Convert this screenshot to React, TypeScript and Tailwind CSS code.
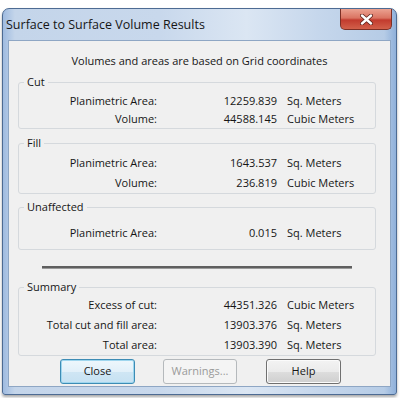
import React from "react";

const FONT = "font-['Open_Sans','Noto_Sans',sans-serif]";

type Row = { label: string; value: string; unit: string };

const cutRows: Row[] = [
  { label: "Planimetric Area:", value: "12259.839", unit: "Sq. Meters" },
  { label: "Volume:", value: "44588.145", unit: "Cubic Meters" },
];
const fillRows: Row[] = [
  { label: "Planimetric Area:", value: "1643.537", unit: "Sq. Meters" },
  { label: "Volume:", value: "236.819", unit: "Cubic Meters" },
];
const unaffectedRows: Row[] = [{ label: "Planimetric Area:", value: "0.015", unit: "Sq. Meters" }];
const summaryRows: Row[] = [
  { label: "Excess of cut:", value: "44351.326", unit: "Cubic Meters" },
  { label: "Total cut and fill area:", value: "13903.376", unit: "Sq. Meters" },
  { label: "Total area:", value: "13903.390", unit: "Sq. Meters" },
];

function ResultRow({ row, h }: { row: Row; h: string }) {
  return (
    <div className={`flex items-center ${h}`}>
      <div className="w-[138px] text-right">{row.label}</div>
      <div className="w-[120px] text-right">{row.value}</div>
      <div className="ml-[10px]">{row.unit}</div>
    </div>
  );
}

function Group({ title, rows, className, rowH, bodyClass }: { title: string; rows: Row[]; className: string; rowH: string; bodyClass: string }) {
  return (
    <fieldset className={`ml-[9px] mr-[14px] rounded-[3px] border border-[#d5d9dd] ${className}`}>
      <legend className="ml-[5px] px-[3px] leading-[16px]">{title}</legend>
      <div className={bodyClass}>
        {rows.map((r) => (
          <ResultRow key={r.label} row={r} h={rowH} />
        ))}
      </div>
    </fieldset>
  );
}

export default function App() {
  return (
    <div className={`w-[400px] h-[398px] bg-white pt-[8px] pl-[2px] overflow-hidden ${FONT}`}>
      <div className="w-[395px] h-[387px] rounded-t-[7px] rounded-b-[3px] border border-[#4d6b93] bg-[linear-gradient(90deg,#9fbbe0_0%,#c4d5ea_3%,#c8d8ec_40%,#dbe6f3_62%,#c6d7ec_80%,#b6cce6_97%,#8fb0da_100%)] shadow-[0_2px_3px_rgba(0,0,0,0.35)] flex flex-col">
        <div className="h-[31px] flex justify-between">
          <div className="pl-[3px] pt-[7px] text-[12.5px] leading-[17px] text-[#161616]">Surface to Surface Volume Results</div>
          <div className="mr-[4px] w-[52px] h-[21px] rounded-b-[5px] border border-t-0 border-[#7d2f25] bg-[linear-gradient(180deg,#eba291_0%,#da7462_45%,#c23b2e_55%,#d2604a_100%)] flex items-center justify-center">
            <svg width="13" height="11" viewBox="0 0 13 11">
              <path d="M2 1.5 L11 9.5 M11 1.5 L2 9.5" stroke="#5a2018" strokeWidth="4" strokeLinecap="round" />
              <path d="M2 1.5 L11 9.5 M11 1.5 L2 9.5" stroke="#ffffff" strokeWidth="2.4" strokeLinecap="round" />
            </svg>
          </div>
        </div>
        <div className="ml-[5px] mr-[5px] mb-[7px] flex-1 border border-[#8ea6c4] bg-[#f0f0f0] text-[11px] text-[#161616] flex flex-col">
          <div className="pt-[12px] h-[28px] leading-[16px] text-center">Volumes and areas are based on Grid coordinates</div>
          <Group title="Cut" rows={cutRows} className="mt-[5px]" rowH="h-[18px]" bodyClass="pt-[2px]" />
          <Group title="Fill" rows={fillRows} className="mt-[6px]" rowH="h-[20px]" bodyClass="pt-[2px] pb-[0px]" />
          <Group title="Unaffected" rows={unaffectedRows} className="mt-[5px]" rowH="h-[20px]" bodyClass="pt-[8px] pb-[6px]" />
          <div className="ml-[33px] mt-[16px] w-[310px] h-[3px] bg-[#5f5f5f] border-b border-[#9a9a9a]" />
          <Group title="Summary" rows={summaryRows} className="mt-[10px]" rowH="h-[20px]" bodyClass="" />
          <div className="mt-[3px] flex ml-[51px]">
            <button className="w-[75px] h-[25px] rounded-[3px] border border-[#3d8cb5] bg-[linear-gradient(180deg,#eef7fc_0%,#e2f0f9_50%,#cfe6f4_52%,#c6e1f2_100%)] shadow-[inset_0_0_0_1px_#9fd6ee] text-[#161616]">
              Close
            </button>
            <button className="ml-[28px] w-[74px] h-[25px] rounded-[3px] border border-[#b5b9bc] bg-[#f4f4f4] text-[#9a9a9a]">
              Warnings...
            </button>
            <button className="ml-[29px] w-[75px] h-[25px] rounded-[3px] border border-[#707070] bg-[linear-gradient(180deg,#f3f3f3_0%,#ebebeb_50%,#dddddd_52%,#cfcfcf_100%)] shadow-[inset_0_0_0_1px_#fbfbfb] text-[#161616]">
              Help
            </button>
          </div>
        </div>
      </div>
    </div>
  );
}
